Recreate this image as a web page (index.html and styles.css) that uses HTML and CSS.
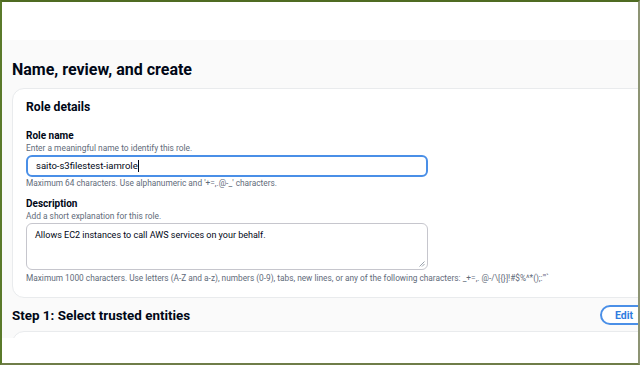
FILE: index.html
```html
<!DOCTYPE html>
<html lang="en">
    <head>
        <meta charset="UTF-8">
        <meta name="viewport" content="width=device-width, initial-scale=1.0">
        <title>Name, review, and create</title>
        <link rel="stylesheet" href="styles.css">
    </head>
    <body>
        <div class="frame">
            <div class="top-band"></div>

            <div class="page">
                <h1 class="page-title">Name, review, and create</h1>

                <div class="card">
                    <h2 class="card-title">Role details</h2>

                    <div class="field">
                        <div class="label">Role name</div>
                        <div class="hint">Enter a meaningful name to identify this role.</div>
                        <div class="input focused">saito-s3filestest-iamrole<span class="caret"></span></div>
                        <div class="constraint">Maximum 64 characters. Use alphanumeric and '+=,.@-_' characters.</div>
                    </div>

                    <div class="field">
                        <div class="label">Description</div>
                        <div class="hint">Add a short explanation for this role.</div>
                        <div class="textarea">
                            Allows EC2 instances to call AWS services on your behalf.
                            <svg class="grip" width="6" height="6" viewBox="0 0 6 6">
                                <path d="M5.5 0.5 L0.5 5.5 M5.5 3 L3 5.5" stroke="#9ba3ad" stroke-width="1" fill="none"/>
                            </svg>
                        </div>
                        <div class="constraint constraint-gap">Maximum 1000 characters. Use letters (A-Z and a-z), numbers (0-9), tabs, new lines, or any of the following characters: _+=,. @-/\[{}]!#$%^*();:"'`</div>
                    </div>
                </div>

                <div class="step-head">
                    <h2 class="step-title">Step 1: Select trusted entities</h2>
                    <button class="btn-edit">Edit</button>
                </div>

                <div class="card card-next"></div>
            </div>

            <div class="bottom-band"></div>
        </div>
    </body>
</html>
```

FILE: styles.css
```css
* {
    box-sizing: border-box;
}

body {
    margin: 0;
    font-family: Roboto, 'Open Sans', sans-serif;
    color: #000716;
}

.frame {
    width: 640px;
    height: 365px;
    border-top: 2px solid #4f6b22;
    border-left: 2px solid #5a7a2a;
    border-right: 2px solid #8d9474;
    border-bottom: 2px solid #6f7d48;
    overflow: hidden;
    display: flex;
    flex-direction: column;
    background: #fff;
}

.top-band {
    height: 38px;
    flex: none;
}

.page {
    background: #fafafa;
    height: 298px;
    flex: none;
    padding: 19px 0 0 10px;
    width: 680px;
    overflow: hidden;
}

.bottom-band {
    flex: 1;
}

.page-title {
    margin: 0 0 7px 0;
    font-size: 16px;
    font-weight: 700;
    line-height: 22px;
}

.card {
    background: #fff;
    border: 1px solid #e9ebed;
    border-radius: 12px;
    width: 660px;
    padding: 10px 13px 13px 13px;
}

.card-title {
    margin: 0 0 14px 0;
    font-size: 12.2px;
    line-height: 16px;
    font-weight: 700;
}

.field {
    margin-bottom: 8px;
}

.field:last-child {
    margin-bottom: 0;
}

.label {
    font-size: 10px;
    line-height: 14px;
    font-weight: 700;
}

.hint, .constraint {
    font-size: 8.4px;
    line-height: 11px;
    color: #5f6b7a;
}

.constraint {
    font-size: 8.3px;
    margin-top: 1px;
}

.constraint-gap {
    margin-top: 3px;
}

.input, .textarea {
    width: 402px;
    margin-top: 1px;
    border-radius: 6px;
    background: #fff;
    color: #000716;
    padding: 0 8px;
}

.input {
    height: 22px;
    font-size: 9.5px;
    line-height: 18px;
    border: 2px solid #4a8fe7;
    display: flex;
    align-items: center;
}

.caret {
    display: inline-block;
    width: 1px;
    height: 12px;
    background: #000716;
}

.textarea {
    position: relative;
    height: 47px;
    font-size: 9px;
    line-height: 14px;
    border: 1px solid #c6c6cd;
    padding-top: 4px;
}

.grip {
    position: absolute;
    right: 2px;
    bottom: 2px;
}

.step-head {
    display: flex;
    align-items: center;
    justify-content: space-between;
    width: 640px;
    margin-top: 7px;
    height: 20px;
}

.step-title {
    margin: 0;
    font-size: 13.4px;
    font-weight: 700;
}

.btn-edit {
    width: 52px;
    height: 20px;
    border: 2px solid #4a8fe7;
    border-radius: 12px;
    background: #fff;
    color: #2f7ce0;
    font-family: inherit;
    font-weight: 700;
    font-size: 10.5px;
    text-align: left;
    padding: 0 0 0 13px;
}

.card-next {
    margin-top: 6px;
    height: 40px;
}
```
